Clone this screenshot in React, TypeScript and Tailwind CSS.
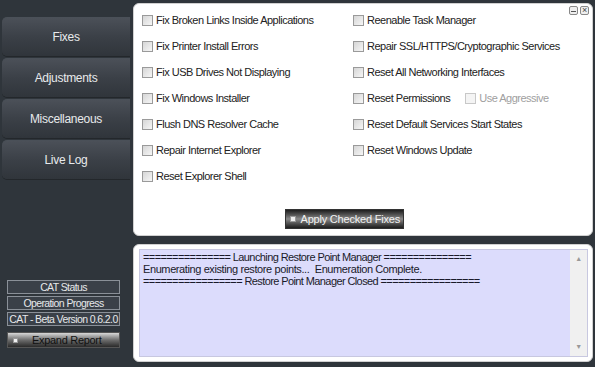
import React from "react";

const left = [
  "Fix Broken Links Inside Applications",
  "Fix Printer Install Errors",
  "Fix USB Drives Not Displaying",
  "Fix Windows Installer",
  "Flush DNS Resolver Cache",
  "Repair Internet Explorer",
  "Reset Explorer Shell",
];
const right = [
  "Reenable Task Manager",
  "Repair SSL/HTTPS/Cryptographic Services",
  "Reset All Networking Interfaces",
  "Reset Permissions",
  "Reset Default Services Start States",
  "Reset Windows Update",
];

function Box({ dim }: { dim?: boolean }) {
  return (
    <span
      className={
        "inline-block w-[11px] h-[11px] border shrink-0 " +
        (dim
          ? "border-[#c8c8c8] bg-[#f4f4f4]"
          : "border-[#9a9a9a] bg-gradient-to-br from-[#d6d6d6] to-[#f6f6f6]")
      }
    />
  );
}

function Item({ label, extra }: { label: string; extra?: boolean }) {
  return (
    <div className="h-[26px] flex items-center gap-[3px] whitespace-nowrap">
      <Box />
      <span>{label}</span>
      {extra && (
        <span className="flex items-center gap-[3px] ml-[12px] text-[#a0a0a0]">
          <Box dim />
          <span>Use Aggressive</span>
        </span>
      )}
    </div>
  );
}

function NavBtn({ label }: { label: string }) {
  return (
    <div className="h-[39px] flex items-center justify-center rounded-l-[5px] border-t border-[#4a5058] bg-gradient-to-b from-[#4b5058] via-[#3b4047] to-[#30353b] text-[#e8eaec] text-[12px] tracking-[-0.3px] shadow-[0_1px_0_#23272b]">
      {label}
    </div>
  );
}

function StatusBox({ label }: { label: string }) {
  return (
    <div className="h-[14px] border border-[#8a9098] bg-[#3a4048] text-[#e6e8ea] text-[10.5px] tracking-[-0.6px] leading-[12px] whitespace-nowrap flex items-center justify-center">
      {label}
    </div>
  );
}

export default function App() {
  return (
    <div
      className="w-[595px] h-[367px] bg-[#2f353b] flex text-[11px] tracking-[-0.5px] text-[#222]"
      style={{ fontFamily: '"Liberation Sans", Arial, sans-serif' }}
    >
      <div className="w-[133px] flex flex-col pl-[2px] pr-[3px]">
        <div className="flex flex-col gap-[2px] pt-[17px]">
          <NavBtn label="Fixes" />
          <NavBtn label="Adjustments" />
          <NavBtn label="Miscellaneous" />
          <NavBtn label="Live Log" />
        </div>
        <div className="mt-auto mb-[19px] ml-[5px] w-[113px] flex flex-col gap-[2px]">
          <StatusBox label="CAT Status" />
          <StatusBox label="Operation Progress" />
          <StatusBox label="CAT - Beta Version 0.6.2.0" />
          <div className="mt-[4px] h-[16px] flex items-center gap-[14px] pl-[5px] border border-[#555] bg-gradient-to-b from-[#d8d8d8] via-[#6e6e6e] to-[#2a2a2a] text-[#111] text-[11px] tracking-[-0.3px] whitespace-nowrap">
            <span className="w-[5px] h-[5px] bg-[#f0f0f0] border border-[#999]" />
            <span>Expand Report</span>
          </div>
        </div>
      </div>
      <div className="flex-1 flex flex-col pt-[3px] pr-[2px] pb-[5px] gap-[8px]">
        <div className="relative h-[233px] bg-white rounded-[6px] border border-[#d0d0d0] flex flex-col">
          <div className="absolute top-[2px] right-[3px] flex gap-[2px]">
            <span className="w-[9px] h-[9px] border border-[#888] rounded-[2px] bg-[#eee] flex items-end justify-center">
              <span className="w-[5px] h-[1px] bg-[#555] mb-[2px]" />
            </span>
            <span className="w-[9px] h-[9px] border border-[#888] rounded-[2px] bg-[#eee] text-[9px] leading-[7px] text-center text-[#444]">
              ×
            </span>
          </div>
          <div className="flex pt-[3px] pl-[8px]">
            <div className="w-[211px]">
              {left.map((l) => (
                <Item key={l} label={l} />
              ))}
            </div>
            <div>
              {right.map((l) => (
                <Item key={l} label={l} extra={l === "Reset Permissions"} />
              ))}
            </div>
          </div>
          <div className="mt-auto mb-[6px] flex justify-center pr-[38px]">
            <div className="w-[119px] h-[20px] flex items-center gap-[5px] pl-[4px] border border-[#333] bg-gradient-to-b from-[#1e1e1e] via-[#8a8a8a] to-[#1e1e1e] text-[#f2f2f2] text-[11px] tracking-[-0.2px] whitespace-nowrap">
              <span className="w-[6px] h-[6px] bg-[#eee] border border-[#999]" />
              <span>Apply Checked Fixes</span>
            </div>
          </div>
        </div>
        <div className="flex-1 bg-white rounded-[6px] border border-[#d0d0d0] p-[4px] pl-[5px]">
          <div className="h-full flex bg-[#dcdcfc] border border-[#c8c8e0]">
            <div className="flex-1 pl-[3px] pt-[1px] text-[11px] tracking-[-0.6px] leading-[12px] text-[#1a1a2a] whitespace-pre">
              <div>=============== Launching Restore Point Manager ===============</div>
              <div className="tracking-[-0.4px]">Enumerating existing restore points...  Enumeration Complete.</div>
              <div>================= Restore Point Manager Closed =================</div>
            </div>
            <div className="w-[17px] bg-[#f0f0f0] flex flex-col justify-between items-center py-[4px] text-[7px] text-[#999]">
              <span>▲</span>
              <span>▼</span>
            </div>
          </div>
        </div>
      </div>
    </div>
  );
}
